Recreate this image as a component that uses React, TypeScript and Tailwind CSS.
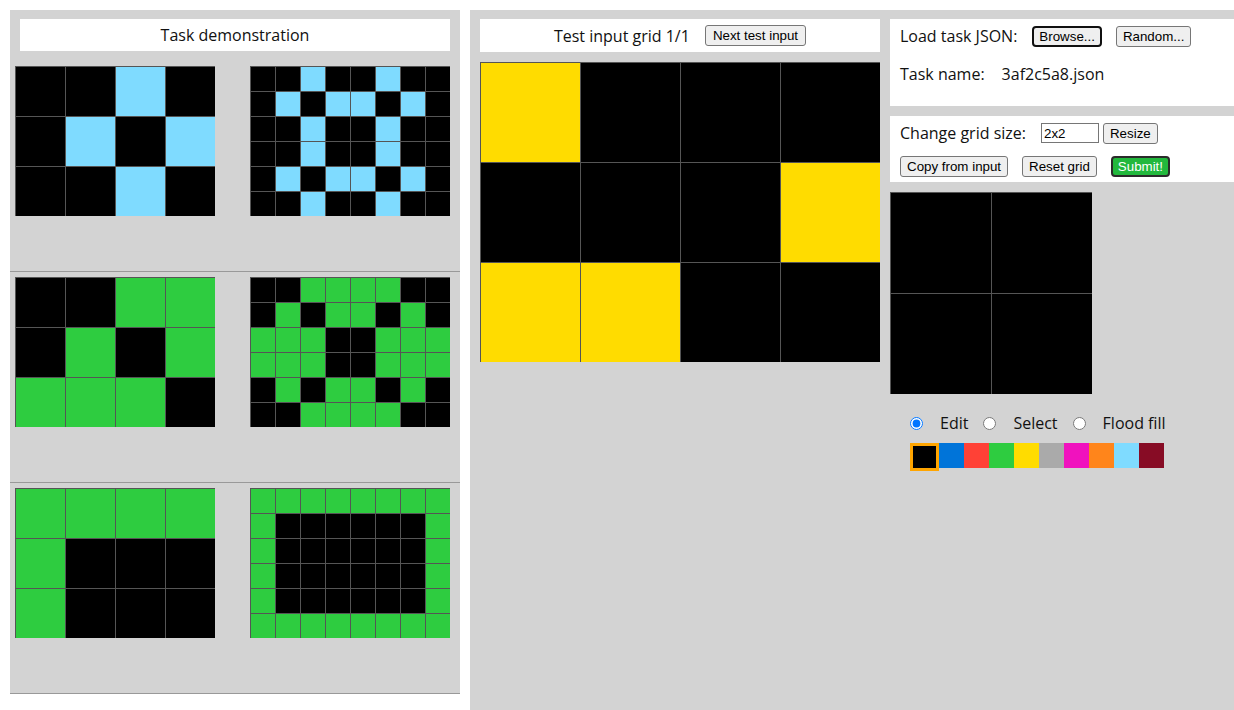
import React from "react"

const C: Record<string, string> = {
  B: "#000000",
  T: "#7FDBFF",
  G: "#2ECC40",
  Y: "#FFDC00",
}

const palette = ["#000000", "#0074D9", "#FF4136", "#2ECC40", "#FFDC00", "#AAAAAA", "#F012BE", "#FF851B", "#7FDBFF", "#870C25"]

const pairs: string[][][] = [
  [
    ["BBTB", "BTBT", "BBTB"],
    ["BBTBBTBB", "BTBTTBTB", "BBTBBTBB", "BBTBBTBB", "BTBTTBTB", "BBTBBTBB"],
  ],
  [
    ["BBGG", "BGBG", "GGGB"],
    ["BBGGGGBB", "BGBGGBGB", "GGGBBGGG", "GGGBBGGG", "BGBGGBGB", "BBGGGGBB"],
  ],
  [
    ["GGGG", "GBBB", "GBBB"],
    ["GGGGGGGG", "GBBBBBBG", "GBBBBBBG", "GBBBBBBG", "GBBBBBBG", "GGGGGGGG"],
  ],
]

const testInput = ["YBBB", "BBBY", "YYBB"]
const output = ["BB", "BB"]

function Grid({ rows, size }: { rows: string[]; size: number }) {
  return (
    <div className="flex flex-col">
      {rows.map((r, i) => (
        <div key={i} className="flex">
          {r.split("").map((c, j) => (
            <div
              key={j}
              className="border-t border-l border-[#555]"
              style={{ width: size, height: size, backgroundColor: C[c] }}
            />
          ))}
        </div>
      ))}
    </div>
  )
}

const base = "h-[21px] pt-[1px] text-[13.33px] font-['Liberation_Sans',Arial,sans-serif] leading-none whitespace-nowrap"
const btn = base + " px-[6px] bg-[#efefef] border border-[#767676] rounded-[3px] text-black"
const btnFocus = base + " px-[5px] bg-[#efefef] border-2 border-[#101010] rounded-[4px] text-black"
const btnSubmit = base + " px-[5px] bg-[#22b83d] border-2 border-[#2b2b2b] rounded-[4px] text-white"

export default function App() {
  return (
    <div className="flex gap-[10px] pl-[10px] pt-[10px] font-['Open_Sans',sans-serif] text-[16px] text-[#111] bg-white min-h-[710px]">
      {/* demonstration */}
      <section className="w-[450px] h-[684px] shrink-0 bg-[#d3d3d3] pt-[9px]">
        <div className="mx-[10px] h-[32px] bg-white flex items-center justify-center">Task demonstration</div>
        <div className="mt-[10px]">
          {pairs.map((p, i) => (
            <div key={i} className="h-[211px] border-b border-[#999] pt-[5px] pl-[5px] flex items-start gap-[35px]">
              <Grid rows={p[0]} size={50} />
              <Grid rows={p[1]} size={25} />
            </div>
          ))}
        </div>
      </section>

      {/* test + editor */}
      <section className="flex-1 min-w-0 h-[700px] bg-[#d3d3d3] pt-[9px] pl-[10px] flex gap-[10px] overflow-hidden">
        <div className="w-[400px] shrink-0">
          <div className="h-[33px] bg-white flex items-center justify-center gap-[15px]">
            <span>Test input grid 1/1</span>
            <button className={btn + " px-[7px]"}>Next test input</button>
          </div>
          <div className="mt-[10px]">
            <Grid rows={testInput} size={100} />
          </div>
        </div>

        <div className="flex-1 min-w-0">
          <div className="h-[87px] bg-white pl-[10px] pt-[6px]">
            <div className="h-[22px] flex items-center">
              <span>Load task JSON:</span>
              <button className={btnFocus + " ml-[15px]"}>Browse...</button>
              <button className={btn + " ml-[14px]"}>Random...</button>
            </div>
            <div className="h-[22px] mt-[16px] flex items-center">
              <span>Task name:</span>
              <span className="ml-[17px]">3af2c5a8.json</span>
            </div>
          </div>

          <div className="h-[66px] mt-[10px] bg-white pl-[10px] pt-[7px]">
            <div className="h-[20px] flex items-center">
              <span>Change grid size:</span>
              <input
                defaultValue="2x2"
                className="ml-[15px] w-[58px] h-[20px] border border-[#767676] bg-white px-[2px] text-[13.33px] font-['Liberation_Sans',Arial,sans-serif] text-black outline-none"
              />
              <button className={btn + " ml-[4px]"}>Resize</button>
            </div>
            <div className="h-[21px] mt-[13px] flex items-center gap-[14px]">
              <button className={btn}>Copy from input</button>
              <button className={btn}>Reset grid</button>
              <button className={btnSubmit}>Submit!</button>
            </div>
          </div>

          <div className="mt-[10px]">
            <Grid rows={output} size={101} />
          </div>

          <div className="mt-[22px] h-[14px] flex items-center pl-[20px]">
            <input type="radio" name="mode" defaultChecked className="w-[13px] h-[13px] m-0" />
            <span className="ml-[17px]">Edit</span>
            <input type="radio" name="mode" className="w-[13px] h-[13px] m-0 ml-[15px]" />
            <span className="ml-[17px]">Select</span>
            <input type="radio" name="mode" className="w-[13px] h-[13px] m-0 ml-[15px]" />
            <span className="ml-[17px]">Flood fill</span>
          </div>

          <div className="mt-[13px] pl-[20px] flex items-start">
            {palette.map((c, i) => (
              <div
                key={i}
                className={i === 0 ? "w-[29px] h-[28px] border-[3px] border-[#FFA500]" : "w-[25px] h-[25px]"}
                style={{ backgroundColor: c }}
              />
            ))}
          </div>
        </div>
      </section>
    </div>
  )
}
